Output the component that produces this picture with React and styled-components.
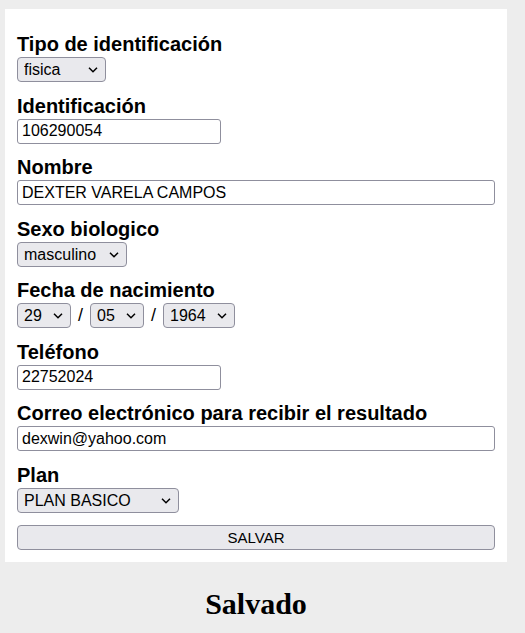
import React from "react";
import styled, { createGlobalStyle } from "styled-components";

const Global = createGlobalStyle`
  html, body { margin: 0; padding: 0; background: #ededed; }
  body { font-family: "Liberation Sans", Arial, sans-serif; color: #000; }
`;

const Page = styled.div`
  width: 502px;
  padding: 9px 0 0 5px;
`;

const Card = styled.form`
  background: #fff;
  padding: 24px 12px 12px 12px;
  display: flex;
  flex-direction: column;
`;

const Field = styled.div`
  display: flex;
  flex-direction: column;
  align-items: flex-start;
  margin-bottom: 12.5px;
`;

const Label = styled.label`
  font-weight: bold;
  font-size: 20px;
  line-height: 23px;
  margin-bottom: 1px;
`;

const Input = styled.input`
  box-sizing: border-box;
  width: ${(p) => p.$w || "100%"};
  height: 25px;
  border: 1px solid #8f8f9d;
  border-radius: 3px;
  background: #fff;
  padding: 0 4px;
  margin: 0;
  font-family: "Liberation Sans", Arial, sans-serif;
  font-size: 16px;
  color: #000;
  outline: none;
`;

const SelectWrap = styled.div`
  position: relative;
  display: inline-flex;
  width: ${(p) => p.$w}px;
`;

const Select = styled.select`
  appearance: none;
  -webkit-appearance: none;
  box-sizing: border-box;
  width: 100%;
  height: 25px;
  border: 1px solid #8f8f9d;
  border-radius: 4px;
  background: #e9e9ed;
  padding: 0 20px 0 6px;
  margin: 0;
  font-family: "Liberation Sans", Arial, sans-serif;
  font-size: 16px;
  color: #000;
  outline: none;
`;

const Chevron = styled.svg`
  position: absolute;
  right: 8px;
  top: 10px;
  pointer-events: none;
`;

const DateRow = styled.div`
  display: flex;
  align-items: center;
  gap: 7px;
`;

const Slash = styled.span`
  font-size: 18px;
  line-height: 25px;
`;

const Button = styled.button`
  box-sizing: border-box;
  width: 100%;
  height: 25px;
  border: 1px solid #8f8f9d;
  border-radius: 4px;
  background: #e9e9ed;
  font-family: "Liberation Sans", Arial, sans-serif;
  font-size: 15px;
  color: #000;
  padding: 0;
  margin: 0;
`;

const Status = styled.h2`
  margin: 25px 0 0 0;
  text-align: center;
  font-family: "Liberation Serif", "Times New Roman", serif;
  font-weight: bold;
  font-size: 30px;
  line-height: 34px;
`;

function Dropdown({ w, value, options }) {
  return (
    <SelectWrap $w={w}>
      <Select defaultValue={value}>
        {options.map((o) => (
          <option key={o} value={o}>
            {o}
          </option>
        ))}
      </Select>
      <Chevron width="10" height="6" viewBox="0 0 10 6">
        <polyline
          points="1,0.8 5,4.8 9,0.8"
          fill="none"
          stroke="#000"
          strokeWidth="1.5"
        />
      </Chevron>
    </SelectWrap>
  );
}

export default function App() {
  return (
    <>
      <Global />
      <Page>
        <Card onSubmit={(e) => e.preventDefault()}>
          <Field>
            <Label>Tipo de identificación</Label>
            <Dropdown w={89} value="fisica" options={["fisica", "juridica"]} />
          </Field>
          <Field>
            <Label>Identificación</Label>
            <Input $w="204px" defaultValue="106290054" />
          </Field>
          <Field>
            <Label>Nombre</Label>
            <Input defaultValue="DEXTER VARELA CAMPOS" />
          </Field>
          <Field>
            <Label>Sexo biologico</Label>
            <Dropdown w={110} value="masculino" options={["masculino", "femenino"]} />
          </Field>
          <Field>
            <Label>Fecha de nacimiento</Label>
            <DateRow>
              <Dropdown w={54} value="29" options={["29"]} />
              <Slash>/</Slash>
              <Dropdown w={54} value="05" options={["05"]} />
              <Slash>/</Slash>
              <Dropdown w={72} value="1964" options={["1964"]} />
            </DateRow>
          </Field>
          <Field>
            <Label>Teléfono</Label>
            <Input $w="204px" defaultValue="22752024" />
          </Field>
          <Field>
            <Label>Correo electrónico para recibir el resultado</Label>
            <Input defaultValue="dexwin@yahoo.com" />
          </Field>
          <Field>
            <Label>Plan</Label>
            <Dropdown w={162} value="PLAN BASICO" options={["PLAN BASICO"]} />
          </Field>
          <Button type="submit">SALVAR</Button>
        </Card>
        <Status>Salvado</Status>
      </Page>
    </>
  );
}
